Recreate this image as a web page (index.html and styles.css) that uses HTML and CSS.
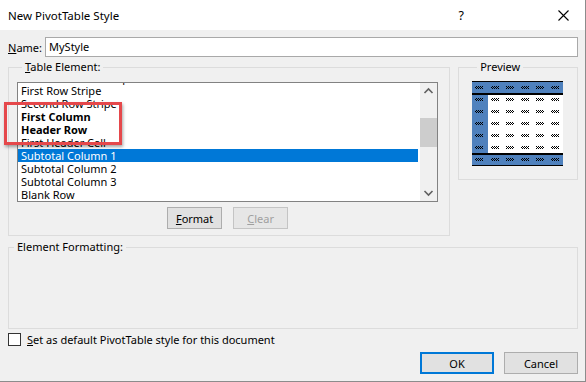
FILE: index.html
```html
<!DOCTYPE html>
<html>
<head>
<meta charset="UTF-8">
<title>New PivotTable Style</title>
<link rel="stylesheet" href="styles.css">
</head>
<body>
<div class="dialog">
  <div class="titlebar">
    <span class="title">New PivotTable Style</span>
    <span class="help">?</span>
    <svg class="close" width="11" height="11" viewBox="0 0 11 11">
      <path d="M0.5 0.5 L10.5 10.5 M10.5 0.5 L0.5 10.5" stroke="#000" stroke-width="1.1" fill="none"/>
    </svg>
  </div>

  <div class="content">
    <div class="name-row">
      <label class="name-label"><u>N</u>ame:</label>
      <div class="textbox">MyStyle</div>
    </div>

    <div class="middle">
      <fieldset class="group table-group">
        <legend><u>T</u>able Element:</legend>
        <div class="listbox">
          <div class="items">
            <div class="item">Second Column Stripe</div>
            <div class="item">First Row Stripe</div>
            <div class="item">Second Row Stripe</div>
            <div class="item bold">First Column</div>
            <div class="item bold">Header Row</div>
            <div class="item">First Header Cell</div>
            <div class="item selected">Subtotal Column 1</div>
            <div class="item">Subtotal Column 2</div>
            <div class="item">Subtotal Column 3</div>
            <div class="item">Blank Row</div>
          </div>
          <div class="scrollbar">
            <svg class="arrow" width="17" height="17" viewBox="0 0 17 17">
              <path d="M4.5 10 L8.5 6 L12.5 10" stroke="#606060" stroke-width="1.6" fill="none"/>
            </svg>
            <div class="track">
              <div class="thumb"></div>
            </div>
            <svg class="arrow" width="17" height="17" viewBox="0 0 17 17">
              <path d="M4.5 7 L8.5 11 L12.5 7" stroke="#606060" stroke-width="1.6" fill="none"/>
            </svg>
          </div>
        </div>
        <div class="list-buttons">
          <button class="btn"><u>F</u>ormat</button>
          <button class="btn disabled"><u>C</u>lear</button>
        </div>
      </fieldset>

      <fieldset class="group preview-group">
        <legend>Preview</legend>
        <svg class="preview" width="91" height="85" viewBox="0 0 91 85">
          <defs>
            <pattern id="ck" width="2" height="2" patternUnits="userSpaceOnUse">
              <rect width="1" height="1" fill="#000"/>
              <rect x="1" y="1" width="1" height="1" fill="#000"/>
            </pattern>
            <g id="marks">
              <rect x="3" y="0" width="8" height="3" fill="url(#ck)"/>
              <rect x="19" y="0" width="8" height="3" fill="url(#ck)"/>
              <rect x="34" y="0" width="8" height="3" fill="url(#ck)"/>
              <rect x="49" y="0" width="8" height="3" fill="url(#ck)"/>
              <rect x="64" y="0" width="8" height="3" fill="url(#ck)"/>
              <rect x="79" y="0" width="8" height="3" fill="url(#ck)"/>
            </g>
          </defs>
          <rect width="91" height="85" fill="#fff"/>
          <rect x="0" y="0" width="91" height="13" fill="#4f81bd"/>
          <rect x="0" y="13" width="16" height="60" fill="#4f81bd"/>
          <rect x="0" y="73" width="91" height="12" fill="#4f81bd"/>
          <rect x="0" y="0" width="91" height="1" fill="#000"/>
          <rect x="0" y="12" width="91" height="2" fill="#000"/>
          <rect x="0" y="72" width="91" height="2" fill="#000"/>
          <rect x="0" y="84" width="91" height="1" fill="#000"/>
          <use href="#marks" y="5"/>
          <use href="#marks" y="17"/>
          <use href="#marks" y="29"/>
          <use href="#marks" y="41"/>
          <use href="#marks" y="53"/>
          <use href="#marks" y="65"/>
          <use href="#marks" y="77"/>
        </svg>
      </fieldset>
    </div>

    <fieldset class="group format-group">
      <legend>Element Formatting:</legend>
    </fieldset>

    <div class="check-row">
      <span class="checkbox"></span>
      <span class="check-label"><u>S</u>et as default PivotTable style for this document</span>
    </div>

    <div class="dialog-buttons">
      <button class="btn ok">OK</button>
      <button class="btn cancel">Cancel</button>
    </div>
  </div>
</div>

<div class="callout"></div>
</body>
</html>
```

FILE: styles.css
```css
  body {
    font-family: "Noto Sans", Arial, sans-serif;
    font-size: 11px;
    color: #000;
    margin: 0;
    padding: 0;
    background-color: #f0f0f0;
  }

  .dialog {
    width: 586px;
    height: 382px;
    box-sizing: border-box;
    border-right: 1px solid #8c8c8c;
    border-bottom: 1px solid #8c8c8c;
    background-color: #f0f0f0;
  }

  .titlebar {
    height: 30px;
    background-color: #fff;
    display: flex;
    align-items: center;
    padding-left: 8px;
  }

  .title {
    flex: 1;
    font-size: 11.5px;
  }

  .help {
    font-size: 12.5px;
    margin-right: 94px;
  }

  .close {
    margin-right: 16px;
  }

  .content {
    padding: 0 7px 0 8px;
    border-left: 1px solid #8c8c8c;
    margin-left: -1px;
    height: 351px;
  }

  .name-row {
    display: flex;
    align-items: center;
    margin-top: 7px;
    height: 20px;
  }

  .name-label {
    width: 37px;
  }

  .textbox {
    flex: 1;
    height: 20px;
    box-sizing: border-box;
    border: 1px solid #a9a9a9;
    background-color: #fff;
    padding: 0 3px;
    line-height: 18px;
  }

  .middle {
    display: flex;
    align-items: flex-start;
    margin-top: 2px;
  }

  .group {
    margin: 0;
    padding: 0;
    border: 1px solid #dcdcdc;
    min-width: 0;
  }

  .group legend {
    margin-left: 5px;
    padding: 0 3px;
    line-height: 16px;
  }

  .table-group {
    width: 443px;
    height: 177px;
    box-sizing: border-box;
    padding: 0 11px 0 8px;
  }

  .listbox {
    margin-top: 7px;
    height: 120px;
    box-sizing: border-box;
    border: 1px solid #828282;
    background-color: #fff;
    display: flex;
    overflow: hidden;
  }

  .items {
    flex: 1;
    margin-top: -12px;
    padding-right: 2px;
  }

  .item {
    height: 13px;
    line-height: 13px;
    padding-left: 3px;
    white-space: nowrap;
  }

  .item.bold {
    font-weight: bold;
  }

  .item.selected {
    background-color: #0078d7;
    color: #fff;
  }

  .scrollbar {
    width: 17px;
    background-color: #f0f0f0;
    display: flex;
    flex-direction: column;
  }

  .track {
    flex: 1;
  }

  .thumb {
    margin-top: 18px;
    height: 29px;
    background-color: #cdcdcd;
  }

  .list-buttons {
    display: flex;
    justify-content: center;
    gap: 11px;
    margin-top: 5px;
  }

  .btn {
    font-family: "Noto Sans", Arial, sans-serif;
    font-size: 11px;
    height: 22px;
    padding: 0;
    background-color: #e1e1e1;
    border: 1px solid #adadad;
    color: #000;
  }

  .list-buttons .btn {
    width: 55px;
  }

  .btn.disabled {
    background-color: #e6e6e6;
    border-color: #c4c4c4;
    color: #a0a0a0;
  }

  .preview-group {
    margin-left: 8px;
    width: 120px;
    height: 121px;
    box-sizing: border-box;
    padding: 0 13px;
  }

  .preview {
    display: block;
    margin-top: 6px;
  }

  .format-group {
    margin-top: 3px;
    height: 90px;
    box-sizing: border-box;
  }

  .check-row {
    display: flex;
    align-items: center;
    margin-top: 4px;
    height: 13px;
  }

  .checkbox {
    width: 13px;
    height: 13px;
    box-sizing: border-box;
    border: 1px solid #333;
    background-color: #fff;
  }

  .check-label {
    margin-left: 6px;
  }

  .dialog-buttons {
    display: flex;
    justify-content: flex-end;
    gap: 10px;
    margin-top: 6px;
  }

  .dialog-buttons .btn {
    width: 74px;
  }

  .btn.ok {
    border: 2px solid #0078d7;
  }

  .callout {
    position: absolute;
    left: 4px;
    top: 102px;
    width: 112px;
    height: 37px;
    border: 3px solid #e5484b;
    box-shadow: 1px 2px 3px rgba(0, 0, 0, 0.35);
  }
```
